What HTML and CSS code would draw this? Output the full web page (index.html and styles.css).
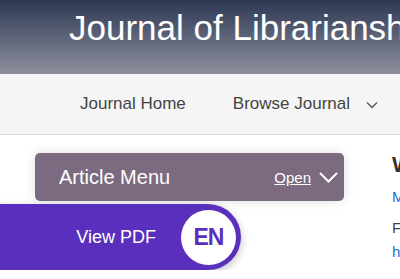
FILE: index.html
```html
<!DOCTYPE html>
<html lang="en">
<head>
  <meta charset="UTF-8">
  <meta name="viewport" content="width=device-width, initial-scale=1.0">
  <title>Journal of Librarianship and Scholarly Communication</title>
  <link rel="stylesheet" href="styles.css">
</head>
<body>
  <header class="masthead">
    <h1>Journal of Librarianship and Scholarly Communication</h1>
  </header>

  <nav class="topnav">
    <a href="#">Journal Home</a>
    <a href="#" class="has-menu">Browse Journal
      <svg width="12" height="8" viewBox="0 0 12 8"><path d="M1 1.5l5 5 5-5" fill="none" stroke="#555" stroke-width="1.3"/></svg>
    </a>
  </nav>

  <div class="page">
    <div class="side">
      <div class="article-menu">
        <span class="menu-title">Article Menu</span>
        <a href="#" class="menu-open">Open
          <svg width="19" height="11" viewBox="0 0 19 11"><path d="M1 1l8.5 8.5L18 1" fill="none" stroke="#fff" stroke-width="2"/></svg>
        </a>
      </div>

      <!-- Botón flotante del PDF -->
      <a href="#" class="pdf-bar">
        <span>View PDF</span>
        <span class="lang">EN</span>
      </a>
    </div>

    <div class="content">
      <h2>Why Publish</h2>
      <p class="link">Mary Smith</p>
      <p class="text">First published online</p>
      <p class="link">https://doi.org/</p>
    </div>
  </div>
</body>
</html>
```

FILE: styles.css
```css
body {
  font-family: "Liberation Sans", Arial, sans-serif;
  margin: 0;
  padding: 0;
  color: #333;
  background-color: #fff;
  overflow: hidden;
}
.masthead {
  height: 74px;
  background: linear-gradient(#2d3854, #8e909d);
  white-space: nowrap;
  overflow: hidden;
}
.masthead h1 {
  margin: 0;
  padding: 8px 0 0 69px;
  font-size: 35px;
  font-weight: normal;
  color: white;
  line-height: 40px;
}
.topnav {
  height: 60px;
  background-color: #f5f5f5;
  border-bottom: 1px solid #d8d8d8;
  display: flex;
  align-items: center;
  gap: 47px;
  padding-left: 80px;
  white-space: nowrap;
}
.topnav a {
  color: #444;
  font-size: 17px;
  text-decoration: none;
  display: flex;
  align-items: center;
}
.topnav svg {
  margin-left: 16px;
  margin-top: 2px;
}
.page {
  display: flex;
  padding-top: 18px;
}
.side {
  width: 391px;
  flex-shrink: 0;
}
.article-menu {
  margin-left: 35px;
  width: 309px;
  height: 48px;
  box-sizing: border-box;
  background-color: #7b6a80;
  border-radius: 5px;
  box-shadow: 0 0 12px rgba(0,0,0,0.12);
  display: flex;
  align-items: center;
  justify-content: space-between;
  padding: 0 6px 0 24px;
}
.menu-title {
  color: white;
  font-size: 20px;
}
.menu-open {
  color: white;
  font-size: 15px;
  display: flex;
  align-items: center;
  gap: 8px;
}
.pdf-bar {
  margin-top: 3px;
  width: 241px;
  height: 66px;
  box-sizing: border-box;
  background-color: #5b2fbd;
  border-radius: 0 33px 33px 0;
  box-shadow: 0 3px 8px rgba(0,0,0,0.25);
  display: flex;
  align-items: center;
  justify-content: flex-end;
  padding-right: 5px;
  text-decoration: none;
  color: white;
  font-size: 18px;
}
.lang {
  width: 55px;
  height: 55px;
  margin-left: 25px;
  border-radius: 50%;
  background-color: white;
  color: #5b2fbd;
  font-size: 23px;
  font-weight: bold;
  letter-spacing: -1px;
  display: flex;
  align-items: center;
  justify-content: center;
}
.content {
  white-space: nowrap;
  padding-left: 1px;
}
.content h2 {
  margin: 0;
  font-size: 22px;
  line-height: 24px;
  color: #333;
}
.content p {
  margin: 0;
  font-size: 15px;
}
.link {
  color: #1f6fcf;
}
.content .link:first-of-type {
  margin-top: 10px;
  line-height: 20px;
}
.text {
  margin-top: 10px !important;
  line-height: 22px;
  color: #444;
}
.content .link:last-child {
  line-height: 26px;
}
```
